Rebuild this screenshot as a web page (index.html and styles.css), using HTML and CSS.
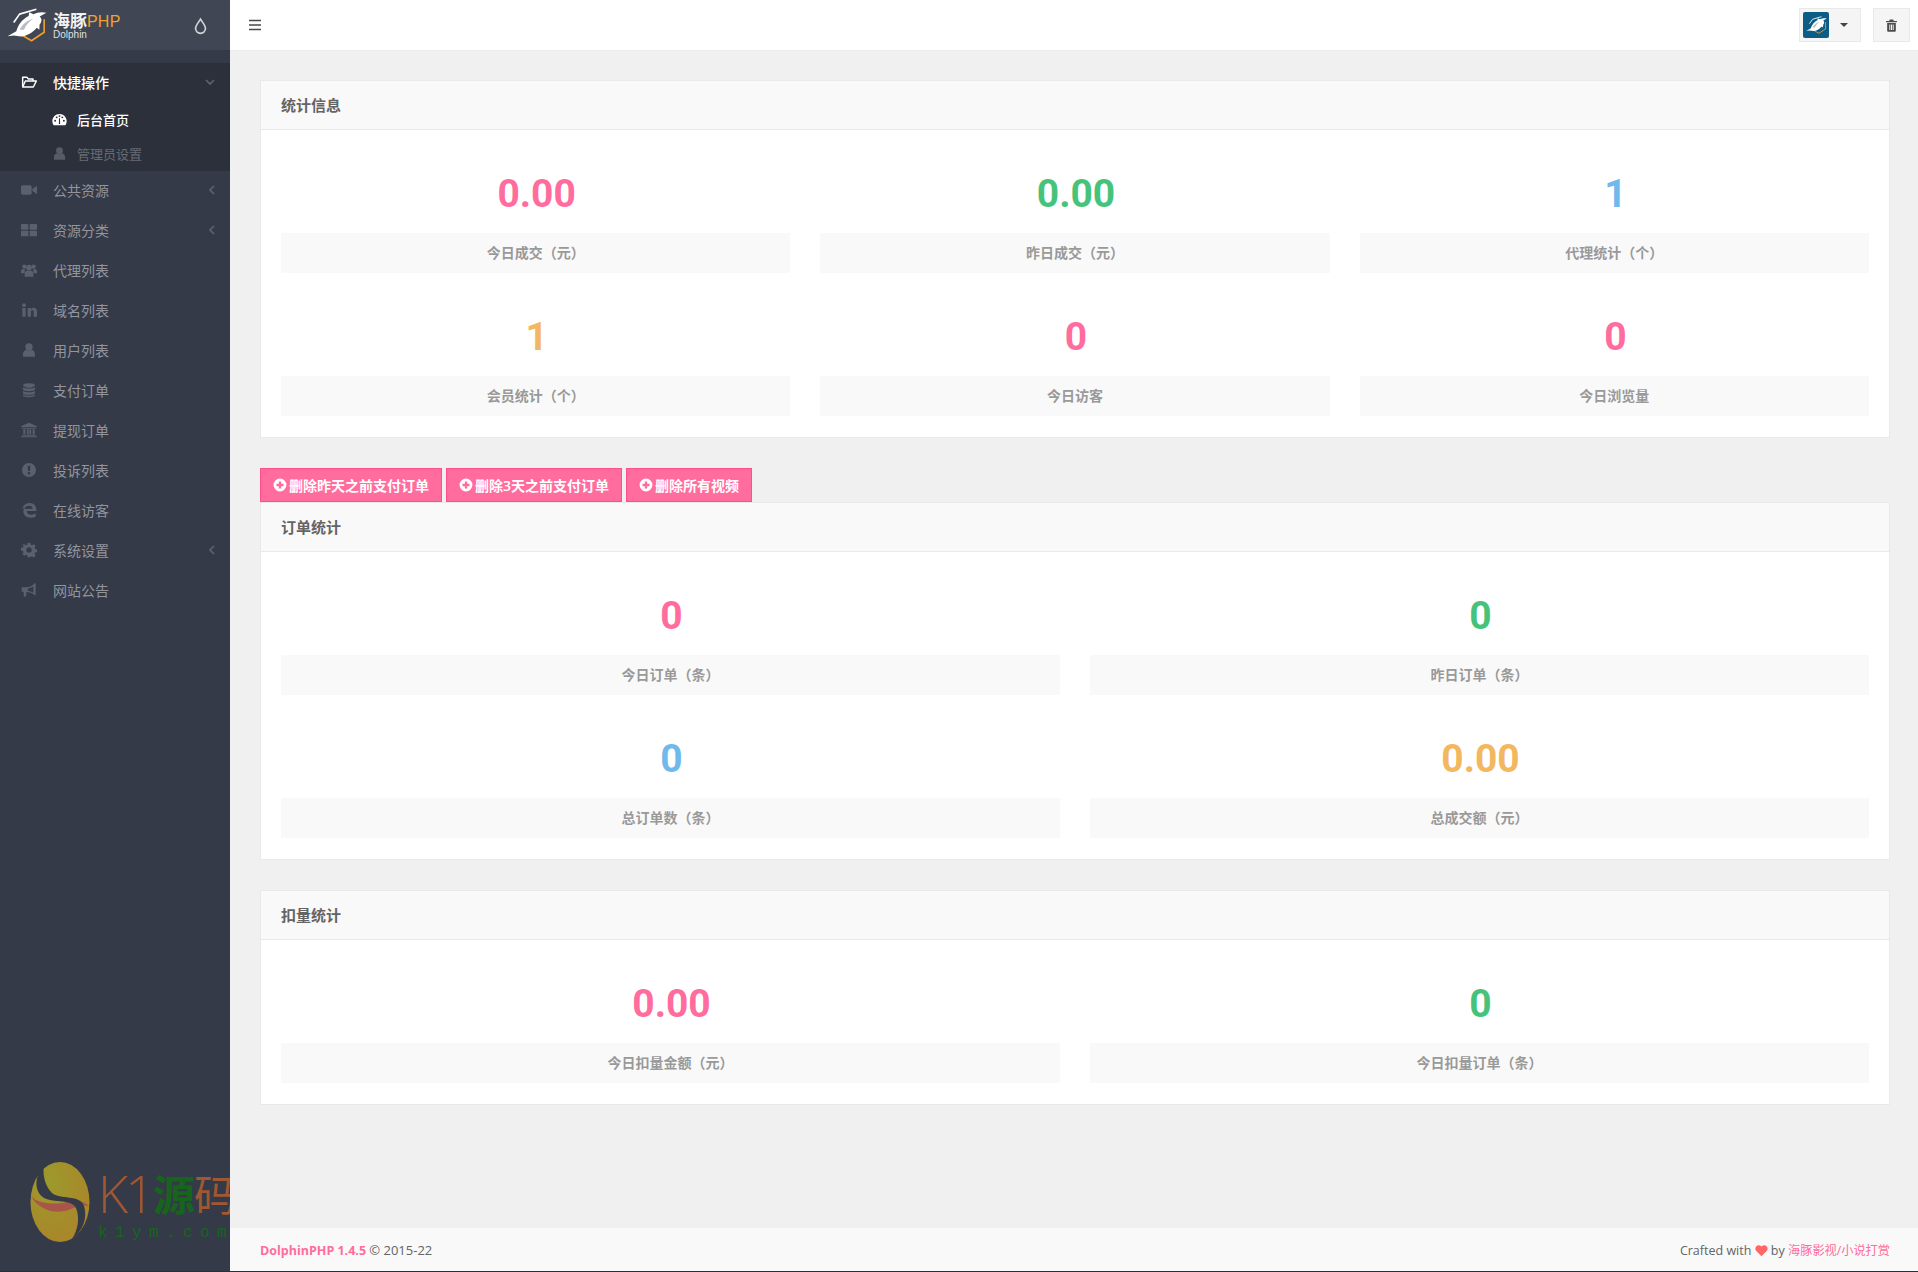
FILE: index.html
```html
<!DOCTYPE html>
<html lang="zh-CN">
<head>
<meta charset="utf-8">
<title>海豚PHP</title>
<link rel="stylesheet" href="styles.css">
</head>
<body>
<svg class="sprite" width="0" height="0" aria-hidden="true">
  <symbol id="i-folder" viewBox="0 0 24 24"><path d="M2.5 18.5V5h6.5l2 2.5h7v3" fill="none" stroke="currentColor" stroke-width="2.2" stroke-linejoin="round"/><path d="M2.5 19.5l4-9H23l-4.5 9z" fill="none" stroke="currentColor" stroke-width="2.2" stroke-linejoin="round"/></symbol>
  <symbol id="i-dash" viewBox="0 0 24 24"><path fill-rule="evenodd" d="M12 3C5.6 3 .5 8.1.5 14.5c0 2.4.7 4.600 2 6.500h19c1.300-1.900 2-4.100 2-6.500C23.500 8.100 18.400 3 12 3zM5 15.500a1.500 1.500 0 1 1 0-3 1.500 1.500 0 0 1 0 3zM7.500 10a1.500 1.500 0 1 1 0-3 1.500 1.500 0 0 1 0 3zM12 8a1.500 1.500 0 1 1 0-3 1.500 1.500 0 0 1 0 3zM19 15.500a1.500 1.500 0 1 1 0-3 1.500 1.500 0 0 1 0 3zM16.500 10a1.500 1.500 0 1 1 0-3 1.500 1.500 0 0 1 0 3zM11 19l.2-9h1.600l.2 9z"/></symbol>
  <symbol id="i-user" viewBox="0 0 24 24"><circle cx="12" cy="7.500" r="5.500"/><path d="M3 22v-4c0-3.500 2.500-6 5-6.500 1 1 2.500 1.500 4 1.500s3-.5 4-1.500c2.500.5 5 3 5 6.500v4z"/></symbol>
  <symbol id="i-video" viewBox="0 0 24 24"><rect x="0" y="5" width="16" height="14" rx="2.500"/><path d="M17 10.500L24 5.500v13l-7-5z"/></symbol>
  <symbol id="i-grid" viewBox="0 0 24 24"><rect x="0" y="3" width="11" height="8.500" rx="1"/><rect x="13" y="3" width="11" height="8.500" rx="1"/><rect x="0" y="13" width="11" height="8.500" rx="1"/><rect x="13" y="13" width="11" height="8.500" rx="1"/></symbol>
  <symbol id="i-users" viewBox="0 0 24 24"><circle cx="5" cy="7" r="3.200"/><circle cx="19" cy="7" r="3.200"/><circle cx="12" cy="8.500" r="4.300"/><path d="M0 17v-3.500c0-1.500 1-2.500 2.500-2.500H6l-1 6zM24 17v-3.500c0-1.500-1-2.500-2.500-2.500H18l1 6zM5.500 22v-5c0-2.500 1.500-4 4-4h5c2.500 0 4 1.500 4 4v5z"/></symbol>
  <symbol id="i-in" viewBox="0 0 24 24"><rect x="2" y="9" width="5" height="13"/><circle cx="4.500" cy="4.800" r="2.800"/><path d="M10 9h4.700v2c1-1.500 2.500-2.400 4.300-2.400 3.500 0 5 2.200 5 5.800V22h-5v-7c0-1.800-.7-2.800-2.200-2.800S14.900 13.300 14.900 15v7H10z"/></symbol>
  <symbol id="i-db" viewBox="0 0 24 24"><path d="M12 2C6.500 2 3 3.300 3 5s3.500 3.500 9 3.500S21 6.700 21 5s-3.500-3-9-3z"/><path d="M3 7.500v3.500c0 1.700 3.500 3 9 3s9-1.300 9-3V7.500c-1.500 1.500-5 2.300-9 2.300s-7.500-.8-9-2.300z"/><path d="M3 13v3.500c0 1.700 3.500 3 9 3s9-1.300 9-3V13c-1.500 1.500-5 2.300-9 2.300S4.500 14.500 3 13z"/><path d="M3 18.500V20c0 1.700 3.500 3 9 3s9-1.300 9-3v-1.500c-1.500 1.500-5 2.300-9 2.300s-7.500-.8-9-2.300z"/></symbol>
  <symbol id="i-bank" viewBox="0 0 24 24"><path d="M12 1L0 6.500V8h24V6.500z"/><path d="M2 9h20v1.200H2zM3.500 11h3v7.500h-3zM8.800 11h2.600v7.500H8.800zM12.600 11h2.600v7.500h-2.600zM17.500 11h3v7.500h-3zM2 19.300h20v1.500H2zM0 21.500h24V23H0z"/></symbol>
  <symbol id="i-alert" viewBox="0 0 24 24"><path fill-rule="evenodd" d="M12 1.500a10.500 10.500 0 1 0 0 21 10.500 10.500 0 0 0 0-21zM10 5.500h4l-.5 8h-3zM12 15a2 2 0 1 1 0 4 2 2 0 0 1 0-4z"/></symbol>
  <symbol id="i-edge" viewBox="0 0 24 24"><path d="M2 11C3 5 7.500 1.500 13 1.500c6.500 0 10 4.500 10 10.500v1.500H8.500c.3 3.500 3 5.500 6.500 5.500 2.800 0 5.500-.8 7-2v5c-2 1-4.500 1.500-7.500 1.500C8 23.500 3.500 20 3.500 14c0-3 1.500-5 3.500-6.500-.5 1-.8 2-.9 3L17.500 10c0-2.800-2-4.500-4.800-4.500C9 5.500 5 7.500 2 11z"/></symbol>
  <symbol id="i-cog" viewBox="0 0 24 24"><path fill-rule="evenodd" d="M10 1h4l.6 3.200 1.900.8 2.700-1.800 2.800 2.800-1.800 2.700.8 1.900 3 .6v4l-3 .6-.8 1.900 1.800 2.700-2.800 2.800-2.700-1.800-1.900.8L14 23h-4l-.6-3.200-1.900-.8-2.700 1.800L2 18l1.800-2.700-.8-1.900-3-.6v-4l3-.6.8-1.900L2 3.600 4.800 3.200l2.700 1.800 1.900-.8zM12 8a4 4 0 1 0 0 8 4 4 0 0 0 0-8z"/></symbol>
  <symbol id="i-horn" viewBox="0 0 24 24"><path fill-rule="evenodd" d="M22 2v18h-1.500C17 16.500 13 15 8 15v5c0 1.500-1 2-2 2s-2-.5-2-2v-5.500H1V8h7c5 0 9-2 12.500-6zM18.500 6.500C16 8.500 13 9.700 10 10v3c3 .3 6 1.500 8.500 3.200z"/></symbol>
  <symbol id="i-plus" viewBox="0 0 24 24"><path fill-rule="evenodd" d="M12 1a11 11 0 1 0 0 22 11 11 0 0 0 0-22zM10 6h4v4h4v4h-4v4h-4v-4H6v-4h4z"/></symbol>
  <symbol id="i-heart" viewBox="0 0 24 24"><path d="M12 22.500L2.500 13C0 10.500 0 6.500 2.500 4s6.500-2.500 9 0l.5.700.5-.7c2.500-2.500 6.500-2.500 9 0s2.500 6.500 0 9z"/></symbol>
  <symbol id="i-trash" viewBox="0 0 24 24"><path fill-rule="evenodd" d="M9 1h6l1.500 2.500H22V6H2V3.500h5.500zM4 7.500h16V21c0 1.500-1 2.500-2.500 2.500h-11C5 23.500 4 22.500 4 21zM8 10v10.500h1.800V10zM11.100 10v10.500h1.800V10zM14.200 10v10.500H16V10z"/></symbol>
  <symbol id="i-logo" viewBox="20 25 122 105">
    <path d="M134 60L134 100 95 126 64 108" fill="none" stroke="#f0a02a" stroke-width="5" stroke-linejoin="round"/>
    <path d="M40 70L58 44 110 29" fill="none" stroke="#fff" stroke-width="5" stroke-linejoin="round"/>
    <path d="M141 40C128 36 112 38 101 44L88 38 86 50C66 60 53 78 48 97L21 112 40 110 62 113C80 112 100 101 111 86L119 92 120 76C128 66 127 57 120 51z" fill="#fff"/>
    <path d="M58 92C66 76 80 64 100 58 86 68 76 80 72 92z" fill="#b8bcc4"/>
  </symbol>
</svg>

<div class="app">
  <aside class="sidebar">
    <div class="brand">
      <svg class="brand-mark"><use href="#i-logo"/></svg>
      <div class="brand-text">
        <div class="brand-name">海豚<span class="brand-php">PHP</span></div>
        <div class="brand-sub">Dolphin</div>
      </div>
      <svg class="drop" viewBox="0 0 24 24"><path d="M12 3c3 5 7 9 7 13a7 7 0 0 1-14 0c0-4 4-8 7-13z" fill="none" stroke="currentColor" stroke-width="2.400"/></svg>
    </div>

    <nav class="nav">
      <div class="nav-group">
        <div class="nav-item is-open">
          <svg class="nav-icon"><use href="#i-folder"/></svg><span>快捷操作</span>
          <svg class="chev chev-down" viewBox="0 0 12 12"><path d="M2 4l4 4 4-4" fill="none" stroke="currentColor" stroke-width="1.600"/></svg>
        </div>
        <div class="sub-item is-active"><svg class="sub-icon"><use href="#i-dash"/></svg><span>后台首页</span></div>
        <div class="sub-item"><svg class="sub-icon"><use href="#i-user"/></svg><span>管理员设置</span></div>
      </div>
      <div class="nav-item"><svg class="nav-icon"><use href="#i-video"/></svg><span>公共资源</span><svg class="chev chev-left" viewBox="0 0 12 12"><path d="M8 2L4 6l4 4" fill="none" stroke="currentColor" stroke-width="1.600"/></svg></div>
      <div class="nav-item"><svg class="nav-icon"><use href="#i-grid"/></svg><span>资源分类</span><svg class="chev chev-left" viewBox="0 0 12 12"><path d="M8 2L4 6l4 4" fill="none" stroke="currentColor" stroke-width="1.600"/></svg></div>
      <div class="nav-item"><svg class="nav-icon"><use href="#i-users"/></svg><span>代理列表</span></div>
      <div class="nav-item"><svg class="nav-icon"><use href="#i-in"/></svg><span>域名列表</span></div>
      <div class="nav-item"><svg class="nav-icon"><use href="#i-user"/></svg><span>用户列表</span></div>
      <div class="nav-item"><svg class="nav-icon"><use href="#i-db"/></svg><span>支付订单</span></div>
      <div class="nav-item"><svg class="nav-icon"><use href="#i-bank"/></svg><span>提现订单</span></div>
      <div class="nav-item"><svg class="nav-icon"><use href="#i-alert"/></svg><span>投诉列表</span></div>
      <div class="nav-item"><svg class="nav-icon"><use href="#i-edge"/></svg><span>在线访客</span></div>
      <div class="nav-item"><svg class="nav-icon"><use href="#i-cog"/></svg><span>系统设置</span><svg class="chev chev-left" viewBox="0 0 12 12"><path d="M8 2L4 6l4 4" fill="none" stroke="currentColor" stroke-width="1.600"/></svg></div>
      <div class="nav-item"><svg class="nav-icon"><use href="#i-horn"/></svg><span>网站公告</span></div>
    </nav>

    <div class="watermark">
      <svg class="wm-logo" viewBox="0 0 60 80">
        <defs>
          <radialGradient id="wm-a" cx="30%" cy="25%" r="70%"><stop offset="0" stop-color="#9c9a2c"/><stop offset="1" stop-color="#a8882a"/></radialGradient>
        </defs>
        <ellipse cx="30" cy="40" rx="29.500" ry="40" fill="url(#wm-a)"/>
        <path d="M1 34c6 8 24 9 36 6 8-2 16-2 22 4-6-1-12 0-18 3-14 6-32 2-40-13z" fill="#a8564a"/>
        <path d="M14 3C5 13 3 29 14 36c10 5 28 1 32 10 4 10 2 22-4 31 10-7 16-20 12-33-4-12-24-6-32-13C16 25 12 14 14 3z" fill="#343a48"/>
      </svg>
      <div class="wm-text">
        <div class="wm-title"><span class="wm-k">K1</span><span class="wm-green">源</span><span class="wm-brown">码</span></div>
        <div class="wm-url">k1ym.com</div>
      </div>
    </div>
  </aside>

  <div class="main">
    <header class="topbar">
      <svg class="burger" viewBox="0 0 14 12"><path d="M1 1.500h12M1 6h12M1 10.500h12" stroke="currentColor" stroke-width="1.700"/></svg>
      <div class="top-actions">
        <div class="top-btn avatar-btn">
          <span class="avatar"><svg class="avatar-mark"><use href="#i-logo"/></svg></span>
          <span class="caret"></span>
        </div>
        <div class="top-btn trash-btn"><svg class="trash"><use href="#i-trash"/></svg></div>
      </div>
    </header>

    <main class="content">
      <section class="card">
        <h3 class="card-head">统计信息</h3>
        <div class="stats cols-3">
          <div class="stat"><div class="num pink">0.00</div><div class="label">今日成交（元）</div></div>
          <div class="stat"><div class="num green">0.00</div><div class="label">昨日成交（元）</div></div>
          <div class="stat"><div class="num blue">1</div><div class="label">代理统计（个）</div></div>
          <div class="stat"><div class="num orange">1</div><div class="label">会员统计（个）</div></div>
          <div class="stat"><div class="num pink">0</div><div class="label">今日访客</div></div>
          <div class="stat"><div class="num pink">0</div><div class="label">今日浏览量</div></div>
        </div>
      </section>

      <div class="actions">
        <a class="btn"><svg class="btn-icon"><use href="#i-plus"/></svg>删除昨天之前支付订单</a>
        <a class="btn"><svg class="btn-icon"><use href="#i-plus"/></svg>删除3天之前支付订单</a>
        <a class="btn"><svg class="btn-icon"><use href="#i-plus"/></svg>删除所有视频</a>
      </div>

      <section class="card">
        <h3 class="card-head">订单统计</h3>
        <div class="stats cols-2">
          <div class="stat"><div class="num pink">0</div><div class="label">今日订单（条）</div></div>
          <div class="stat"><div class="num green">0</div><div class="label">昨日订单（条）</div></div>
          <div class="stat"><div class="num blue">0</div><div class="label">总订单数（条）</div></div>
          <div class="stat"><div class="num orange">0.00</div><div class="label">总成交额（元）</div></div>
        </div>
      </section>

      <section class="card">
        <h3 class="card-head">扣量统计</h3>
        <div class="stats cols-2">
          <div class="stat"><div class="num pink">0.00</div><div class="label">今日扣量金额（元）</div></div>
          <div class="stat"><div class="num green">0</div><div class="label">今日扣量订单（条）</div></div>
        </div>
      </section>
    </main>

    <footer class="footer">
      <div><a class="foot-brand">DolphinPHP 1.4.5</a> <span class="foot-copy">© 2015-22</span></div>
      <div class="foot-right">Crafted with <svg class="heart"><use href="#i-heart"/></svg> by <a class="foot-link">海豚影视/小说打赏</a></div>
    </footer>
  </div>
</div>
</body>
</html>
```

FILE: styles.css
```css
* { box-sizing: border-box; }
html, body { margin: 0; height: 100%; }
body {
  background: #2b3038;
  color: #646464;
  font-family: "Open Sans", "Noto Sans CJK SC", sans-serif;
  font-size: 14px;
}
.sprite { position: absolute; }
.app { display: flex; height: 1271px; overflow: hidden; }

/* sidebar */
.sidebar {
  position: relative;
  flex: 0 0 230px;
  width: 230px;
  background: #343a48;
  overflow: hidden;
}
.brand {
  display: flex;
  align-items: center;
  height: 50px;
  padding: 0 21px 0 7px;
  background: #404653;
}
.brand-mark { width: 40px; height: 34px; flex: none; }
.brand-text { margin-left: 6px; color: #e8e9eb; line-height: 1; padding-top: 2px; }
.brand-name { font-size: 17px; font-weight: 700; line-height: 17px; color: #f2f2f2; white-space: nowrap; }
.brand-php { font-family: "Liberation Sans", sans-serif; font-size: 16px; font-weight: 400; color: #efa231; letter-spacing: .2px; }
.brand-sub { font-family: "Liberation Sans", sans-serif; font-size: 10px; line-height: 10px; color: #dfe0e3; }
.drop { width: 17px; height: 19px; margin-left: auto; color: #d2d4d8; }

.nav { padding-top: 13px; font-size: 14px; color: #92959d; }
.nav-group { background: #2c303b; }
.nav-item {
  display: flex;
  align-items: center;
  height: 40px;
  padding: 0 15px 2px 21px;
}
.nav-item > span { margin-left: 16px; }
.nav-icon { width: 16px; height: 16px; color: #5b606d; fill: currentColor; flex: none; }
.chev { width: 12px; height: 12px; margin-left: auto; color: #5f6470; }
.chev-left { margin-right: -3px; }
.chev-down { margin-right: -1px; }
.is-open { color: #fff; font-weight: 500; }
.is-open .nav-icon { color: #fff; }
.sub-item {
  display: flex;
  align-items: center;
  height: 34px;
  padding: 0 0 2px 52px;
  font-size: 13px;
  color: #666b76;
}
.sub-item > span { margin-left: 10px; }
.sub-icon { width: 15px; height: 15px; fill: currentColor; color: #565b67; }
.is-active { color: #fff; font-weight: 500; }
.is-active .sub-icon { color: #fff; }

.watermark {
  position: absolute;
  left: 30px;
  top: 1162px;
  display: flex;
  width: 240px;
}
.wm-logo { width: 60px; height: 80px; flex: none; }
.wm-text { margin-left: 8px; }
.wm-title { display: flex; align-items: center; height: 60px; font-family: "Noto Sans CJK SC", sans-serif; font-size: 42px; white-space: nowrap; }
.wm-k { font-family: "Open Sans", sans-serif; font-weight: 300; font-size: 52px; letter-spacing: -3px; color: #a05733; }
.wm-brown { color: #a05733; margin-left: -1px; }
.wm-green { color: #17651d; font-weight: 700; margin-left: 1px; }
.wm-url { font-family: "Liberation Mono", monospace; font-size: 16px; line-height: 18px; letter-spacing: 7.400px; color: #17651d; margin-top: 2px; }

/* main column */
.main { flex: 1; min-width: 0; display: flex; flex-direction: column; background: #f0f0f0; }
.topbar {
  display: flex;
  align-items: center;
  justify-content: space-between;
  height: 51px;
  flex: none;
  padding: 0 8px 0 18px;
  background: #fff;
  border-bottom: 1px solid #ececec;
}
.burger { width: 14px; height: 12px; color: #4a4a4a; }
.top-actions { display: flex; gap: 12px; }
.top-btn {
  display: flex;
  align-items: center;
  height: 34px;
  background: #f5f5f5;
  border: 1px solid #e9e9e9;
}
.avatar-btn { width: 62px; padding-left: 3px; }
.avatar {
  display: flex;
  align-items: center;
  justify-content: center;
  width: 26px;
  height: 26px;
  background: #0b5d86;
  border-radius: 2px;
}
.avatar-mark { width: 21px; height: 18px; }
.caret {
  margin-left: 11px;
  border-top: 4px solid #444;
  border-left: 4px solid transparent;
  border-right: 4px solid transparent;
}
.trash-btn { width: 37px; justify-content: center; }
.trash { width: 13px; height: 13px; fill: #4d4d4d; }

.content { padding: 29px 28px 0 30px; }
.card { background: #fff; border: 1px solid #e9e9e9; margin-bottom: 30px; }
.card-head {
  margin: 0;
  height: 49px;
  padding: 0 20px;
  background: #f9f9f9;
  border-bottom: 1px solid #e9e9e9;
  font-size: 15px;
  font-weight: 700;
  line-height: 48px;
  color: #646464;
}
.stats { display: grid; gap: 20px 30px; padding: 20px 20px 21px; }
.cols-3 { grid-template-columns: repeat(3, 1fr); }
.cols-2 { grid-template-columns: repeat(2, 1fr); }
.num {
  height: 83px;
  font-family: Roboto, sans-serif;
  font-size: 39px;
  font-weight: 700;
  line-height: 88px;
  text-align: center;
  padding-left: 2px;
}
.pink { color: #ff6c9d; }
.green { color: #46c37b; }
.blue { color: #70b9eb; }
.orange { color: #f3b760; }
.label {
  height: 40px;
  background: #f9f9f9;
  color: #999;
  font-size: 14px;
  font-weight: 600;
  line-height: 40px;
  text-align: center;
}

.actions { display: flex; gap: 4px; height: 34px; }
.btn {
  display: flex;
  align-items: center;
  height: 34px;
  padding: 0 12px 1px;
  background: #ff6c9d;
  border: 1px solid #ff4e8a;
  color: #fff;
  font-size: 14px;
  font-weight: 600;
}
.btn-icon { width: 14px; height: 14px; margin-right: 2px; fill: #fff; }

.footer {
  display: flex;
  align-items: center;
  justify-content: space-between;
  flex: none;
  height: 43px;
  margin-top: auto;
  padding: 0 28px 0 30px;
  background: #f9f9f9;
  font-size: 12.500px;
  color: #646464;
}
.foot-brand { color: #ff6c9d; font-weight: 700; }
.foot-copy { font-size: 13px; }
.foot-link { color: #ff6c9d; font-size: 12.200px; }
.heart { width: 13px; height: 13px; fill: #f66; vertical-align: -2px; }
```
